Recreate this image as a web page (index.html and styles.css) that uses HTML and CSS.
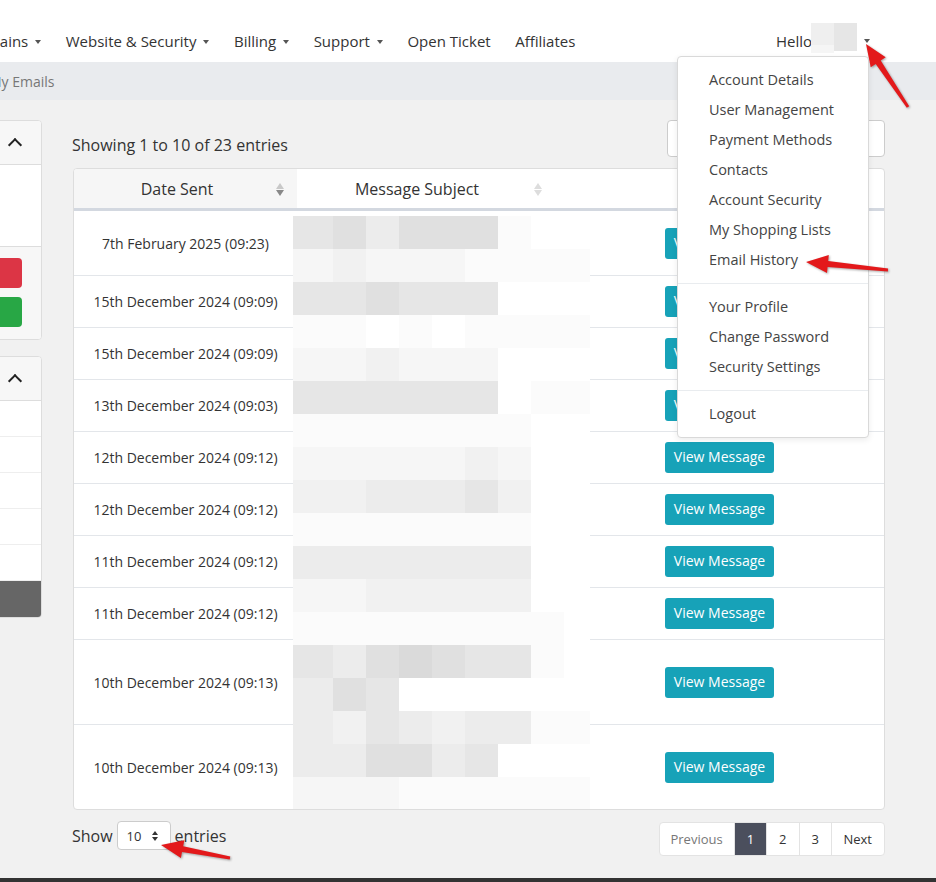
FILE: index.html
```html
<!DOCTYPE html>
<html lang="en">
<head>
    <meta charset="UTF-8">
    <meta name="viewport" content="width=device-width, initial-scale=1.0">
    <title>My Emails</title>
    <link rel="stylesheet" href="styles.css">
</head>
<body>

    <header class="topbar">
        <ul class="nav-main">
            <li><a href="#" class="has-caret">Domains</a></li>
            <li><a href="#" class="has-caret">Website &amp; Security</a></li>
            <li><a href="#" class="has-caret">Billing</a></li>
            <li><a href="#" class="has-caret">Support</a></li>
            <li><a href="#">Open Ticket</a></li>
            <li><a href="#">Affiliates</a></li>
        </ul>
        <div class="nav-user">
            <span>Hello</span>
            <span class="name-blur"><i class="nb-a"></i><i class="nb-b"></i></span>
            <span class="caret"></span>
        </div>
    </header>

    <div class="user-dropdown">
        <a href="#">Account Details</a>
        <a href="#">User Management</a>
        <a href="#">Payment Methods</a>
        <a href="#">Contacts</a>
        <a href="#">Account Security</a>
        <a href="#">My Shopping Lists</a>
        <a href="#">Email History</a>
        <div class="divider"></div>
        <a href="#">Your Profile</a>
        <a href="#">Change Password</a>
        <a href="#">Security Settings</a>
        <div class="divider"></div>
        <a href="#">Logout</a>
    </div>

    <div class="breadcrumb">
        <span>My Emails</span>
    </div>

    <div class="page-body">
        <aside class="sidebar">
            <div class="panel">
                <div class="panel-head"><span class="chevron"></span></div>
                <div class="panel-body"></div>
                <div class="panel-foot">
                    <div class="side-btn btn-red"></div>
                    <div class="side-btn btn-green"></div>
                </div>
            </div>
            <div class="panel">
                <div class="panel-head"><span class="chevron"></span></div>
                <div class="list-item"></div>
                <div class="list-item"></div>
                <div class="list-item"></div>
                <div class="list-item"></div>
                <div class="list-item"></div>
                <div class="list-item active"></div>
            </div>
        </aside>

        <main class="content">
            <div class="table-top">
                <div class="info">Showing 1 to 10 of 23 entries</div>
                <div class="search"></div>
            </div>

            <div class="table-wrap">
                <table class="emails">
                    <colgroup>
                        <col class="c-date">
                        <col class="c-subject">
                        <col>
                    </colgroup>
                    <thead>
                        <tr>
                            <th class="col-date sorting sorted"><span>Date Sent</span></th>
                            <th class="col-subject sorting"><span>Message Subject</span></th>
                            <th></th>
                        </tr>
                    </thead>
                    <tbody>
                        <tr class="tall"><td>7th February 2025 (09:23)</td><td></td><td><a href="#" class="btn-view">View Message</a></td></tr>
                        <tr><td>15th December 2024 (09:09)</td><td></td><td><a href="#" class="btn-view">View Message</a></td></tr>
                        <tr><td>15th December 2024 (09:09)</td><td></td><td><a href="#" class="btn-view">View Message</a></td></tr>
                        <tr><td>13th December 2024 (09:03)</td><td></td><td><a href="#" class="btn-view">View Message</a></td></tr>
                        <tr><td>12th December 2024 (09:12)</td><td></td><td><a href="#" class="btn-view">View Message</a></td></tr>
                        <tr><td>12th December 2024 (09:12)</td><td></td><td><a href="#" class="btn-view">View Message</a></td></tr>
                        <tr><td>11th December 2024 (09:12)</td><td></td><td><a href="#" class="btn-view">View Message</a></td></tr>
                        <tr><td>11th December 2024 (09:12)</td><td></td><td><a href="#" class="btn-view">View Message</a></td></tr>
                        <tr class="xl"><td>10th December 2024 (09:13)</td><td></td><td><a href="#" class="btn-view">View Message</a></td></tr>
                        <tr class="xl"><td>10th December 2024 (09:13)</td><td></td><td><a href="#" class="btn-view">View Message</a></td></tr>
                    </tbody>
                </table>

                <!-- redacted subjects -->
                <div class="mosaic">
                    <div><i class="g5"></i><i class="g6"></i><i class="g4"></i><i class="g6"></i><i class="g6"></i><i class="g6"></i><i class="g1"></i><i class="g0"></i><i class="g0"></i></div>
                    <div><i class="g2"></i><i class="g3"></i><i class="g2"></i><i class="g2"></i><i class="g2"></i><i class="g1"></i><i class="g1"></i><i class="g1"></i><i class="g1"></i></div>
                    <div><i class="g5"></i><i class="g5"></i><i class="g6"></i><i class="g5"></i><i class="g5"></i><i class="g5"></i><i class="g0"></i><i class="g0"></i><i class="g0"></i></div>
                    <div><i class="g1"></i><i class="g1"></i><i class="g0"></i><i class="g1"></i><i class="g0"></i><i class="g1"></i><i class="g1"></i><i class="g1"></i><i class="g1"></i></div>
                    <div><i class="g2"></i><i class="g2"></i><i class="g3"></i><i class="g2"></i><i class="g2"></i><i class="g2"></i><i class="g0"></i><i class="g0"></i><i class="g0"></i></div>
                    <div><i class="g5"></i><i class="g5"></i><i class="g5"></i><i class="g5"></i><i class="g5"></i><i class="g5"></i><i class="g0"></i><i class="g1"></i><i class="g1"></i></div>
                    <div><i class="g1"></i><i class="g1"></i><i class="g1"></i><i class="g1"></i><i class="g1"></i><i class="g1"></i><i class="g1"></i><i class="g0"></i><i class="g0"></i></div>
                    <div><i class="g2"></i><i class="g2"></i><i class="g2"></i><i class="g2"></i><i class="g2"></i><i class="g3"></i><i class="g2"></i><i class="g0"></i><i class="g0"></i></div>
                    <div><i class="g3"></i><i class="g3"></i><i class="g4"></i><i class="g4"></i><i class="g4"></i><i class="g5"></i><i class="g3"></i><i class="g0"></i><i class="g0"></i></div>
                    <div><i class="g1"></i><i class="g1"></i><i class="g1"></i><i class="g1"></i><i class="g1"></i><i class="g1"></i><i class="g1"></i><i class="g0"></i><i class="g0"></i></div>
                    <div><i class="g4"></i><i class="g4"></i><i class="g4"></i><i class="g4"></i><i class="g4"></i><i class="g4"></i><i class="g4"></i><i class="g0"></i><i class="g0"></i></div>
                    <div><i class="g2"></i><i class="g2"></i><i class="g3"></i><i class="g3"></i><i class="g3"></i><i class="g3"></i><i class="g3"></i><i class="g0"></i><i class="g0"></i></div>
                    <div><i class="g1"></i><i class="g1"></i><i class="g1"></i><i class="g1"></i><i class="g1"></i><i class="g1"></i><i class="g1"></i><i class="g1"></i><i class="g0"></i></div>
                    <div><i class="g5"></i><i class="g4"></i><i class="g6"></i><i class="g7"></i><i class="g6"></i><i class="g5"></i><i class="g5"></i><i class="g1"></i><i class="g0"></i></div>
                    <div><i class="g4"></i><i class="g6"></i><i class="g5"></i><i class="g0"></i><i class="g0"></i><i class="g0"></i><i class="g0"></i><i class="g0"></i><i class="g0"></i></div>
                    <div><i class="g4"></i><i class="g3"></i><i class="g5"></i><i class="g4"></i><i class="g3"></i><i class="g4"></i><i class="g4"></i><i class="g1"></i><i class="g1"></i></div>
                    <div><i class="g4"></i><i class="g4"></i><i class="g6"></i><i class="g6"></i><i class="g4"></i><i class="g5"></i><i class="g0"></i><i class="g0"></i><i class="g0"></i></div>
                    <div><i class="g2"></i><i class="g2"></i><i class="g2"></i><i class="g1"></i><i class="g1"></i><i class="g1"></i><i class="g1"></i><i class="g1"></i><i class="g1"></i></div>
                </div>
            </div>

            <div class="table-bottom">
                <div class="length">
                    <span>Show</span>
                    <div class="select-box">10<span class="spin"></span></div>
                    <span>entries</span>
                </div>
                <ul class="pagination">
                    <li class="disabled">Previous</li>
                    <li class="active">1</li>
                    <li>2</li>
                    <li>3</li>
                    <li>Next</li>
                </ul>
            </div>
        </main>
    </div>

    <footer class="footer"></footer>

    <!-- annotation arrows -->
    <svg class="arrows" width="936" height="882" viewBox="0 0 936 882">
        <polygon points="909.2,106.2 880.7,60.6 885.7,57.3 866,44 870.7,67.3 875.7,64 906.8,107.8"/>
        <polygon points="888.1,268.5 828.2,261.1 828.8,255.1 806,262 827,273.1 827.6,267.1 887.9,271.5"/>
        <polygon points="230.3,856.5 183.2,846.2 184.3,840.3 161,845 180.9,857.9 182,852 229.7,859.5"/>
    </svg>

</body>
</html>
```

FILE: styles.css
```css
body {
    font-family: 'Open Sans', 'Noto Sans', sans-serif;
    margin: 0;
    padding: 0;
    width: 936px;
    height: 882px;
    overflow: hidden;
    position: relative;
    background-color: #f1f1f1;
    color: #333;
}

a {
    color: inherit;
    text-decoration: none;
}

/* top navigation */
.topbar {
    height: 62px;
    padding-top: 20px;
    padding-right: 66px;
    box-sizing: border-box;
    background-color: #fff;
    display: flex;
    align-items: center;
    justify-content: space-between;
}

.nav-main {
    display: flex;
    gap: 24.5px;
    list-style: none;
    margin: 0 0 0 -34px;
    padding: 0;
    font-size: 15px;
}

.has-caret::after,
.caret {
    content: "";
    display: inline-block;
    margin-left: 7px;
    vertical-align: 3px;
    border-top: 4px solid #555;
    border-left: 3.5px solid transparent;
    border-right: 3.5px solid transparent;
}

.nav-user {
    display: flex;
    align-items: center;
    font-size: 15px;
}

.name-blur {
    display: flex;
    width: 46px;
    height: 30px;
    margin-left: -1px;
    margin-top: -7px;
}

.name-blur i {
    display: block;
    width: 23px;
}

.nb-a {
    background: linear-gradient(#efefef 73%, #f5f5f5 73%);
}

.nb-b {
    background: linear-gradient(#e6e6e6 93%, #fff 93%);
}

.nav-user .caret {
    margin-left: 7px;
    vertical-align: 0;
}

/* account dropdown */
.user-dropdown {
    position: absolute;
    top: 56px;
    left: 677px;
    width: 190px;
    padding: 8px 0;
    background-color: #fff;
    border: 1px solid #d9d9d9;
    border-radius: 4px;
    box-shadow: 0 2px 6px rgba(0, 0, 0, 0.08);
    z-index: 10;
    font-size: 14.5px;
}

.user-dropdown a {
    display: block;
    padding: 0 31px;
    line-height: 30px;
    height: 30px;
    color: #444;
}

.user-dropdown .divider {
    height: 1px;
    margin: 8px 0;
    background-color: #e9ecef;
}

/* breadcrumb */
.breadcrumb {
    height: 38px;
    display: flex;
    align-items: center;
    background-color: #e9ebee;
    font-size: 14px;
    color: #777;
}

.breadcrumb span {
    margin-left: -11px;
}

/* page */
.page-body {
    display: flex;
    gap: 31px;
    margin-left: -230px;
    padding: 20px 51px 0 0;
}

.sidebar {
    width: 272px;
    flex-shrink: 0;
}

.panel {
    background-color: #fff;
    border: 1px solid #ddd;
    border-radius: 4px;
    margin-bottom: 16px;
    overflow: hidden;
}

.panel-head {
    height: 43px;
    background-color: #f7f7f7;
    border-bottom: 1px solid #ddd;
    display: flex;
    align-items: center;
    justify-content: flex-end;
    padding-right: 21px;
}

.chevron {
    width: 8px;
    height: 8px;
    margin-top: 5px;
    border-top: 2px solid #222;
    border-left: 2px solid #222;
    transform: rotate(45deg);
}

.panel-body {
    height: 81px;
    border-bottom: 1px solid #ddd;
}

.panel-foot {
    background-color: #f7f7f7;
    padding: 11px 19px 12px 12px;
}

.side-btn {
    height: 30px;
    border-radius: 4px;
}

.btn-red {
    background-color: #dc3545;
    margin-bottom: 9px;
}

.btn-green {
    background-color: #28a745;
}

.list-item {
    height: 35px;
    border-bottom: 1px solid #eee;
}

.list-item.active {
    height: 36px;
    border-bottom: none;
    background-color: #666;
}

/* main content */
.content {
    flex: 1;
    min-width: 0;
}

.table-top {
    display: flex;
    justify-content: space-between;
    align-items: center;
    height: 37px;
}

.info {
    font-size: 16px;
    padding-top: 12px;
    margin-left: -1px;
}

.search {
    width: 218px;
    height: 37px;
    box-sizing: border-box;
    background-color: #fff;
    border: 1px solid #ccc;
    border-radius: 4px;
}

.table-wrap {
    position: relative;
    margin-top: 11px;
    background-color: #fff;
    border: 1px solid #ddd;
    border-radius: 4px;
    overflow: hidden;
}

.emails {
    width: 100%;
    table-layout: fixed;
    border-collapse: collapse;
    font-size: 14px;
}

.c-date {
    width: 223px;
}

.c-subject {
    width: 258px;
}

.emails th {
    height: 39px;
    padding: 0;
    font-size: 16px;
    font-weight: normal;
    border-bottom: 3px solid #d3d8e0;
    position: relative;
}

.col-date {
    background-color: #f6f6f6;
}

.col-date span {
    padding-right: 17px;
}

.col-subject span {
    padding-right: 18px;
}

.sorting::before,
.sorting::after {
    content: "";
    position: absolute;
    right: 13px;
    border-left: 4px solid transparent;
    border-right: 4px solid transparent;
}

.sorting::before {
    top: 14px;
    border-bottom: 6px solid #ddd;
}

.sorting::after {
    top: 21px;
    border-top: 6px solid #ddd;
}

.sorted::before {
    border-bottom-color: #c8c8c8;
}

.sorted::after {
    border-top-color: #888;
}

.emails td {
    height: 51px;
    padding: 0;
    text-align: center;
    border-top: 1px solid #e3e6ea;
}

.emails tr.tall td {
    height: 64px;
}

.emails tr.xl td {
    height: 84px;
}

.btn-view {
    display: inline-block;
    height: 31px;
    line-height: 30px;
    padding: 0 9px;
    border-radius: 3px;
    background-color: #17a2b8;
    color: #fff;
    font-size: 14px;
}

/* pixelated blur over the subjects */
.mosaic {
    position: absolute;
    top: 47px;
    left: 219px;
    width: 297px;
}

.mosaic div {
    display: flex;
    height: 33px;
}

.mosaic i {
    width: 33px;
}

.mosaic i:first-child {
    width: 40px;
}

.mosaic i:last-child {
    width: 26px;
}

.g0 { background-color: #fff; }
.g1 { background-color: #fbfbfb; }
.g2 { background-color: #f6f6f6; }
.g3 { background-color: #f1f1f1; }
.g4 { background-color: #ececec; }
.g5 { background-color: #e6e6e6; }
.g6 { background-color: #e0e0e0; }
.g7 { background-color: #dadada; }

.table-bottom {
    display: flex;
    justify-content: space-between;
    align-items: flex-start;
    margin-top: 11px;
}

.length {
    display: flex;
    align-items: center;
    gap: 4px;
    font-size: 16px;
    margin-left: -1px;
}

.select-box {
    width: 54px;
    height: 29px;
    box-sizing: border-box;
    padding-left: 9px;
    display: flex;
    align-items: center;
    background-color: #fff;
    border: 1px solid #ccc;
    border-radius: 4px;
    font-size: 13px;
    color: #333;
}

.spin {
    position: relative;
    width: 7px;
    height: 10px;
    margin-left: 11px;
}

.spin::before,
.spin::after {
    content: "";
    position: absolute;
    left: 0;
    border-left: 3.5px solid transparent;
    border-right: 3.5px solid transparent;
}

.spin::before {
    top: 0;
    border-bottom: 4px solid #333;
}

.spin::after {
    top: 6px;
    border-top: 4px solid #333;
}

.pagination {
    display: flex;
    list-style: none;
    margin: 1px 0 0 0;
    padding: 0;
    font-size: 13px;
    background-color: #fff;
    border: 1px solid #e3e3e3;
    border-radius: 4px;
}

.pagination li {
    height: 32px;
    line-height: 32px;
    padding: 0 12px;
    border-left: 1px solid #e3e3e3;
    color: #333;
}

.pagination li:first-child {
    padding: 0 11px 0 10.5px;
    border-left: none;
}

.pagination li:last-child {
    padding: 0 12px 0 11.5px;
}

.pagination li.disabled {
    color: #777;
}

.pagination li.active {
    background-color: #4b4f5d;
    color: #fff;
}

.footer {
    position: absolute;
    left: 0;
    bottom: 0;
    width: 100%;
    height: 4px;
    background-color: #333;
}

.arrows {
    position: absolute;
    top: 0;
    left: 0;
    pointer-events: none;
    z-index: 20;
    fill: #e3191b;
    filter: drop-shadow(1px 1px 1px rgba(0, 0, 0, 0.35));
}
```
